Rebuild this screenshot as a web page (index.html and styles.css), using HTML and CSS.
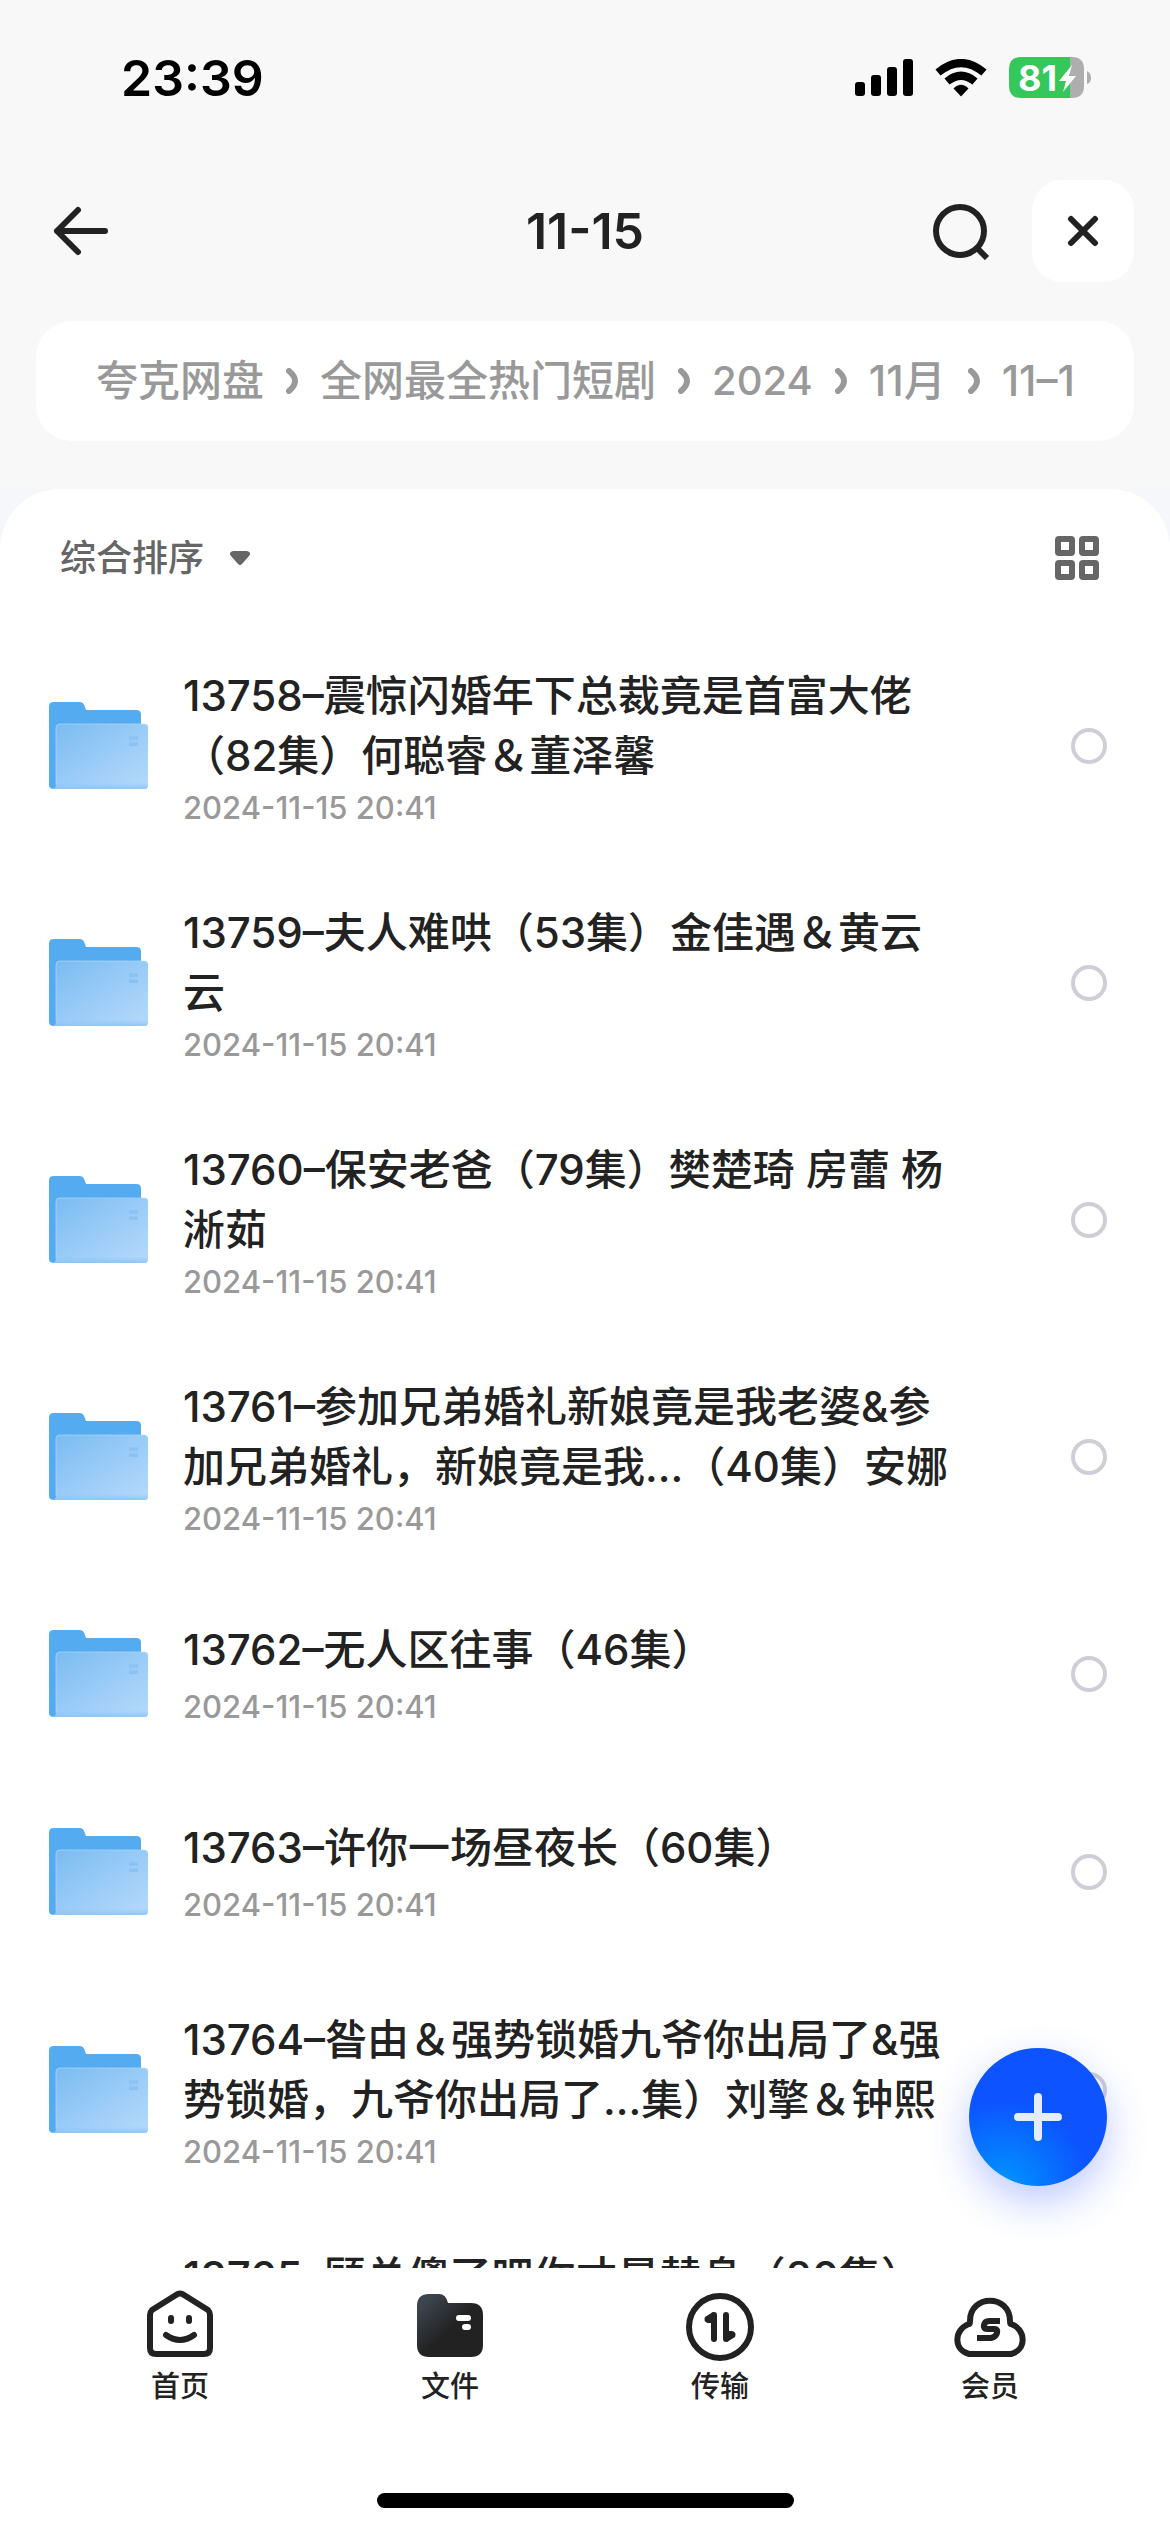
FILE: index.html
```html
<!DOCTYPE html>
<html lang="zh-CN">
<head>
    <meta charset="utf-8">
    <meta name="viewport" content="width=device-width, initial-scale=1">
    <title>11-15</title>
    <link rel="stylesheet" href="styles.css">
</head>
<body>
    <!-- folder icon shared by all the rows -->
    <svg class="defs" width="0" height="0" aria-hidden="true">
        <defs>
            <linearGradient id="folderFront" x1="0" y1="0" x2="1" y2="1">
                <stop offset="0" stop-color="#79bbf1" />
                <stop offset="0.5" stop-color="#99cbf7" />
                <stop offset="1" stop-color="#b6d9fb" />
            </linearGradient>
            <linearGradient id="folderShade" x1="0" y1="0" x2="0" y2="1">
                <stop offset="0.9" stop-color="#8fc6f7" stop-opacity="0" />
                <stop offset="1" stop-color="#8fc6f7" />
            </linearGradient>
            <symbol id="folder" viewBox="0 0 100 100" preserveAspectRatio="none">
                <path fill="#55abef" d="M5 0h26q3 0 4 3l2 6h50q5 0 5 5v85H5q-5 0-5-5V5q0-5 5-5z" />
                <path fill="url(#folderFront)" d="M10 25h85q4 0 4 4v66q0 4-4 4H4q3-1 3-5V29q0-4 3-4z" />
                <path fill="url(#folderShade)" d="M10 25h85q4 0 4 4v66q0 4-4 4H4q3-1 3-5V29q0-4 3-4z" />
                <path fill="none" stroke="#b4dafa" stroke-opacity="0.7" d="M7 94V29q0-4 4-4h84q4 0 4 4" />
                <path stroke="#8ac2f4" stroke-width="4" d="M80 41h9M80 48h9" />
            </symbol>
        </defs>
    </svg>

    <div class="app">
        <div class="status">
            <span class="time">23:39</span>
            <div class="status-icons">
                <svg width="58" height="38" viewBox="0 0 58 38">
                    <rect x="0" y="23" width="10" height="14" rx="3" />
                    <rect x="16" y="16" width="10" height="21" rx="3" />
                    <rect x="32" y="8" width="10" height="29" rx="3" />
                    <rect x="48" y="0" width="10" height="37" rx="3" />
                </svg>
                <svg width="52" height="38" viewBox="0 0 52 38">
                    <path fill="none" stroke="#000" stroke-width="8" d="M3 13.500Q26-5.500 49 13.500M12 22.500Q26 11 40 22.500" />
                    <path d="M26 37.500l-7.500-8q7.500-7.500 15 0z" />
                </svg>
                <svg width="84" height="42" viewBox="0 0 84 42">
                    <path fill="#35c759" d="M12 0h49v41H12Q0 41 0 29V12Q0 0 12 0z" />
                    <path fill="#aeaeae" d="M61 0h2q12 0 12 12v17q0 12-12 12h-2zM78 14q4 2 4 7t-4 6z" />
                    <text class="battery-text" x="9" y="34">81</text>
                    <path fill="#fff" d="M63 8L50 24h7l-3 11 13-16h-7z" />
                </svg>
            </div>
        </div>

        <header class="header">
            <button class="icon-button back" aria-label="返回">
                <svg width="56" height="50" viewBox="0 0 56 50">
                    <path d="M52 25H4M25 4L4 25l21 21" />
                </svg>
            </button>
            <h1 class="title">11-15</h1>
            <div class="actions">
                <button class="icon-button" aria-label="搜索">
                    <svg width="58" height="58" viewBox="0 0 58 58">
                        <circle cx="28" cy="29" r="24" />
                        <path stroke-linecap="butt" d="M45 46l10 10" />
                    </svg>
                </button>
                <button class="icon-button close" aria-label="关闭">
                    <svg width="32" height="32" viewBox="0 0 32 32">
                        <path d="M4 4l24 24M28 4L4 28" />
                    </svg>
                </button>
            </div>
        </header>

        <nav class="breadcrumb" aria-label="路径">
            <div class="crumbs">
                <a href="#">夸克网盘</a>
                <svg width="12" height="26" viewBox="0 0 12 26"><path d="M3 3q12 10 0 20" /></svg>
                <a href="#">全网最全热门短剧</a>
                <svg width="12" height="26" viewBox="0 0 12 26"><path d="M3 3q12 10 0 20" /></svg>
                <a class="year" href="#">2024</a>
                <svg width="12" height="26" viewBox="0 0 12 26"><path d="M3 3q12 10 0 20" /></svg>
                <a href="#">11月</a>
                <svg width="12" height="26" viewBox="0 0 12 26"><path d="M3 3q12 10 0 20" /></svg>
                <a href="#">11–1</a>
            </div>
        </nav>

        <div class="panel-wrap">
            <main class="panel">
                <div class="toolbar">
                    <button class="sort">
                        综合排序
                        <svg width="22" height="16" viewBox="0 0 22 16">
                            <path d="M4 1h14q5 1 2 5l-7 8q-2 2-4 0L2 6Q-1 2 4 1z" />
                        </svg>
                    </button>
                    <button class="grid-toggle" aria-label="网格视图">
                        <svg width="44" height="44" viewBox="0 0 44 44">
                            <rect x="3" y="3" width="14" height="14" rx="1" />
                            <rect x="27" y="3" width="14" height="14" rx="1" />
                            <rect x="3" y="27" width="14" height="14" rx="1" />
                            <rect x="27" y="27" width="14" height="14" rx="1" />
                        </svg>
                    </button>
                </div>

                <ul class="files">
                    <li class="file tall">
                        <svg class="folder"><use href="#folder" /></svg>
                        <div class="info">
                            <label class="name" for="f1">13758–震惊闪婚年下总裁竟是首富大佬<br>（82集）何聪睿＆董泽馨</label>
                            <span class="date">2024-11-15 20:41</span>
                        </div>
                        <input type="checkbox" id="f1">
                    </li>
                    <li class="file tall">
                        <svg class="folder"><use href="#folder" /></svg>
                        <div class="info">
                            <label class="name" for="f2">13759–夫人难哄（53集）金佳遇＆黄云<br>云</label>
                            <span class="date">2024-11-15 20:41</span>
                        </div>
                        <input type="checkbox" id="f2">
                    </li>
                    <li class="file tall">
                        <svg class="folder"><use href="#folder" /></svg>
                        <div class="info">
                            <label class="name" for="f3">13760–保安老爸（79集）樊楚琦 房蕾 杨<br>淅茹</label>
                            <span class="date">2024-11-15 20:41</span>
                        </div>
                        <input type="checkbox" id="f3">
                    </li>
                    <li class="file tall">
                        <svg class="folder"><use href="#folder" /></svg>
                        <div class="info">
                            <label class="name" for="f4">13761–参加兄弟婚礼新娘竟是我老婆&amp;参<br>加兄弟婚礼，新娘竟是我...（40集）安娜</label>
                            <span class="date">2024-11-15 20:41</span>
                        </div>
                        <input type="checkbox" id="f4">
                    </li>
                    <li class="file">
                        <svg class="folder"><use href="#folder" /></svg>
                        <div class="info">
                            <label class="name" for="f5">13762–无人区往事（46集）</label>
                            <span class="date">2024-11-15 20:41</span>
                        </div>
                        <input type="checkbox" id="f5">
                    </li>
                    <li class="file">
                        <svg class="folder"><use href="#folder" /></svg>
                        <div class="info">
                            <label class="name" for="f6">13763–许你一场昼夜长（60集）</label>
                            <span class="date">2024-11-15 20:41</span>
                        </div>
                        <input type="checkbox" id="f6">
                    </li>
                    <li class="file tall">
                        <svg class="folder"><use href="#folder" /></svg>
                        <div class="info">
                            <label class="name" for="f7">13764–昝由＆强势锁婚九爷你出局了&amp;强<br>势锁婚，九爷你出局了...集）刘擎＆钟熙</label>
                            <span class="date">2024-11-15 20:41</span>
                        </div>
                        <input type="checkbox" id="f7">
                    </li>
                    <li class="file tall">
                        <svg class="folder"><use href="#folder" /></svg>
                        <div class="info">
                            <label class="name" for="f8">13765–顾总傻了吧你才是替身（80集）</label>
                        </div>
                        <input type="checkbox" id="f8">
                    </li>
                </ul>
            </main>
            <button class="add" aria-label="新建">
                <svg width="48" height="48" viewBox="0 0 48 48">
                    <path d="M24 4v40M4 24h40" />
                </svg>
            </button>
        </div>

        <footer class="footer">
            <nav class="tabs">
                <a href="#">
                    <svg width="72" height="72" viewBox="0 0 72 72">
                        <path d="M32 6q4-3 8 0l24 15q2 2 2 5v33q0 6-6 6H12q-6 0-6-6V26q0-3 2-5z" />
                        <path d="M22 46q14 10 28 0" />
                        <path d="M27 29v3M45 29v3" />
                    </svg>
                    首页
                </a>
                <a href="#">
                    <svg width="72" height="72" viewBox="0 0 72 72">
                        <defs>
                            <linearGradient id="tabFolder" x1="0.100" y1="0.150" x2="0.500" y2="0.550">
                                <stop offset="0" stop-color="#3c444d" />
                                <stop offset="1" stop-color="#222222" />
                            </linearGradient>
                        </defs>
                        <path class="solid" fill="url(#tabFolder)" d="M15 5h10q7 0 9 9h23q12 0 12 12v30q0 12-12 12H15Q3 68 3 56V17Q3 5 15 5z" />
                        <path class="light" d="M45 29h9M51 38h3" />
                    </svg>
                    文件
                </a>
                <a href="#">
                    <svg width="72" height="72" viewBox="0 0 72 72">
                        <circle cx="36" cy="38" r="31" />
                        <path d="M30 26v24M42 26v24" />
                        <path class="solid" fill="#222" d="M29 23l-8 5q-2 5 3 6h6zM43 53l8-5q2-5-3-6h-6z" />
                    </svg>
                    传输
                </a>
                <a href="#">
                    <svg width="72" height="72" viewBox="0 0 72 72">
                        <path d="M15 65C-1 61 0 40 15 35q1 0 1-3C16 5 56 5 56 32q0 3 1 3C72 40 73 61 57 65z" />
                        <path stroke-linecap="butt" stroke-width="6" d="M46 32H35q-4 0-5 4t3 4h8q3 0 2 4t-6 5H23" />
                    </svg>
                    会员
                </a>
            </nav>
            <div class="home-bar"></div>
        </footer>
    </div>
</body>
</html>
```
FILE: styles.css
```css
* {
    box-sizing: border-box;
}
body {
    margin: 0;
    font-family: Inter, "Noto Sans CJK SC", sans-serif;
    color: #222;
    background-color: #f8f8f8;
}
button {
    padding: 0;
    border: none;
    background: none;
    font-family: inherit;
    color: inherit;
    cursor: pointer;
}
a {
    color: inherit;
    text-decoration: none;
}
svg {
    display: block;
    flex-shrink: 0;
}
.defs {
    position: absolute;
}
.app {
    display: flex;
    flex-direction: column;
    height: 100vh;
    overflow: hidden;
}

/* status bar */
.status {
    display: flex;
    justify-content: space-between;
    align-items: center;
    height: 156px;
    padding: 0 77px 0 121px;
    flex-shrink: 0;
}
.time {
    font-size: 50px;
    font-weight: 600;
    color: #000;
}
.status-icons {
    display: flex;
    align-items: center;
    gap: 22px;
}
.battery-text {
    font-size: 36px;
    font-weight: 700;
    fill: #fff;
}

/* header */
.header {
    display: grid;
    grid-template-columns: 1fr auto 1fr;
    align-items: center;
    height: 102px;
    margin: 24px 36px 0;
    flex-shrink: 0;
}
.icon-button {
    display: flex;
    align-items: center;
    justify-content: center;
}
.icon-button svg {
    fill: none;
    stroke: #222;
    stroke-width: 6;
    stroke-linecap: round;
    stroke-linejoin: round;
}
.back {
    justify-self: start;
    padding-left: 17px;
}
.title {
    margin: 0;
    font-size: 50px;
    font-weight: 600;
}
.actions {
    display: flex;
    justify-content: flex-end;
    align-items: center;
    gap: 42px;
}
.close {
    width: 102px;
    height: 102px;
    border-radius: 30px;
    background-color: #fff;
}

/* breadcrumb */
.breadcrumb {
    height: 120px;
    margin: 39px 36px 0;
    padding: 0 60px;
    border-radius: 36px;
    background-color: #fff;
    flex-shrink: 0;
}
.crumbs {
    display: flex;
    align-items: center;
    gap: 22px;
    height: 100%;
    overflow: hidden;
    white-space: nowrap;
    font-size: 42px;
    font-weight: 500;
    line-height: 60px;
    color: #999;
}
.crumbs .year {
    font-size: 40px;
}
.crumbs svg {
    fill: none;
    stroke: #999;
    stroke-width: 6;
    stroke-linecap: round;
}

/* file list */
.panel-wrap {
    position: relative;
    flex: 1;
    min-height: 0;
    margin-top: 48px;
    background-color: #f5f7fa;
}
.panel {
    height: 100%;
    overflow: hidden;
    border-radius: 60px 60px 0 0;
    background-color: #fff;
}
.toolbar {
    display: flex;
    justify-content: space-between;
    align-items: center;
    height: 138px;
    padding: 0 71px 0 60px;
}
.sort {
    display: flex;
    align-items: center;
    gap: 25px;
    font-size: 36px;
    font-weight: 500;
    line-height: 48px;
    color: #666;
}
.sort svg {
    fill: #666;
}
.grid-toggle svg {
    fill: none;
    stroke: #666;
    stroke-width: 6;
}
.files {
    margin: 0;
    padding: 0;
    list-style: none;
}
.file {
    display: flex;
    align-items: center;
    height: 198px;
    padding: 0 63px 0 49px;
}
.folder {
    width: 100px;
    height: 88px;
}
.info {
    display: flex;
    flex-direction: column;
    gap: 5px;
    flex: 1;
    margin-left: 34px;
}
.name {
    font-size: 42px;
    font-weight: 500;
    line-height: 60px;
    white-space: nowrap;
}
.date {
    font-size: 31px;
    font-weight: 500;
    line-height: 44px;
    color: #999;
}
.tall {
    height: 237px;
}
.tall .info {
    gap: 0;
    min-height: 169px;
    padding-top: 5px;
}
.tall .name {
    min-height: 120px;
}
input[type="checkbox"] {
    appearance: none;
    width: 36px;
    height: 36px;
    margin: 0;
    border: 4px solid #cfced6;
    border-radius: 50%;
}
input[type="checkbox"]:checked {
    border-color: #0d53ff;
    background-color: #0d53ff;
}
.add {
    position: absolute;
    right: 63px;
    bottom: 82px;
    display: flex;
    align-items: center;
    justify-content: center;
    width: 138px;
    height: 138px;
    border-radius: 50%;
    background: radial-gradient(circle at 25% 100%, #0096ff 0%, #0d53ff 50%);
    box-shadow: 0 16px 40px rgba(40, 80, 255, 0.3);
}
.add svg {
    stroke: #e4ecff;
    stroke-width: 8;
    stroke-linecap: round;
}

/* bottom tabs */
.footer {
    flex-shrink: 0;
    background-color: #fff;
}
.tabs {
    display: grid;
    grid-template-columns: repeat(4, 1fr);
    height: 225px;
    padding: 21px 45px 0;
}
.tabs a {
    display: flex;
    flex-direction: column;
    align-items: center;
    gap: 4px;
    font-size: 29px;
    font-weight: 500;
    line-height: 44px;
}
.tabs svg {
    fill: none;
    stroke: #222;
    stroke-width: 6;
    stroke-linecap: round;
    stroke-linejoin: round;
}
.tabs .solid {
    stroke: none;
}
.tabs .light {
    stroke: #fff;
}
.home-bar {
    width: 417px;
    height: 15px;
    margin: 0 auto 24px;
    border-radius: 8px;
    background-color: #000;
}
```
